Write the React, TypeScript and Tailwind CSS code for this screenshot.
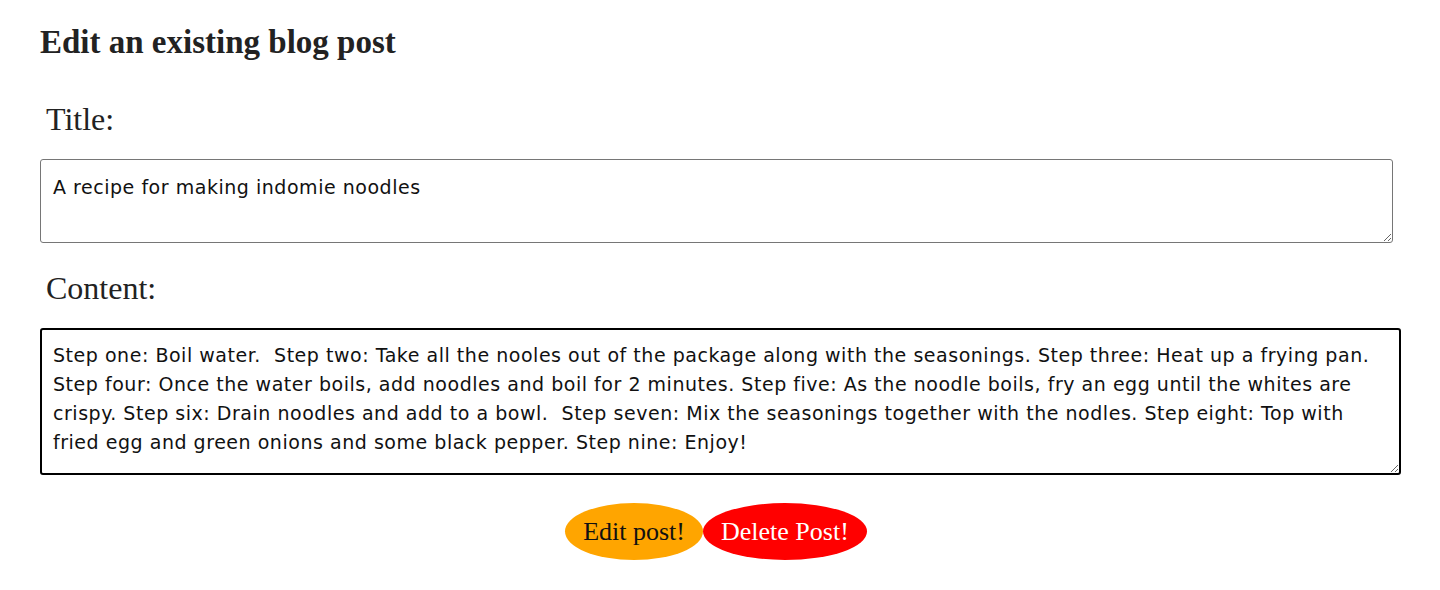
const titleText = 'A recipe for making indomie noodles';

const contentText =
  'Step one: Boil water.  Step two: Take all the nooles out of the package along with the seasonings. Step three: Heat up a frying pan. Step four: Once the water boils, add noodles and boil for 2 minutes. Step five: As the noodle boils, fry an egg until the whites are crispy. Step six: Drain noodles and add to a bowl.  Step seven: Mix the seasonings together with the nodles. Step eight: Top with fried egg and green onions and some black pepper. Step nine: Enjoy!';

export default function App() {
  return (
    <div className="min-h-[590px] bg-white pl-10 pt-[24px] text-[#222] font-['Liberation_Serif',serif]">
      <h2 className="text-[33px] font-bold leading-[37px]">Edit an existing blog post</h2>

      <form className="w-[1352px] mt-[40px]" onSubmit={(e) => e.preventDefault()}>
        <label className="block ml-[6px] text-[32px] leading-[37px]">Title:</label>
        <textarea
          defaultValue={titleText}
          className="block mt-[21px] w-[1353px] h-[84px] rounded-[3px] border border-[#767676] px-3 py-[13px] text-[19px] tracking-[0.53px] leading-[29px] text-[#111] font-['DejaVu_Sans',sans-serif] resize-y outline-none"
        />

        <label className="block ml-[6px] mt-[27px] text-[32px] leading-[37px]">Content:</label>
        <textarea
          defaultValue={contentText}
          className="block mt-[21px] w-[1361px] h-[147px] rounded-[3px] border-2 border-black px-[11px] py-[11px] text-[19px] tracking-[0.53px] leading-[29px] text-[#111] font-['DejaVu_Sans',sans-serif] resize-y outline-none"
        />

        <div className="flex justify-center mt-[28px]">
          <button
            type="submit"
            className="h-[57px] px-[18px] rounded-[50%] bg-[#ffa500] text-[26px] text-[#111]"
          >
            Edit post!
          </button>
          <button
            type="button"
            className="h-[57px] px-[18px] rounded-[50%] bg-[#ff0000] text-[26px] text-white"
          >
            Delete Post!
          </button>
        </div>
      </form>
    </div>
  );
}
